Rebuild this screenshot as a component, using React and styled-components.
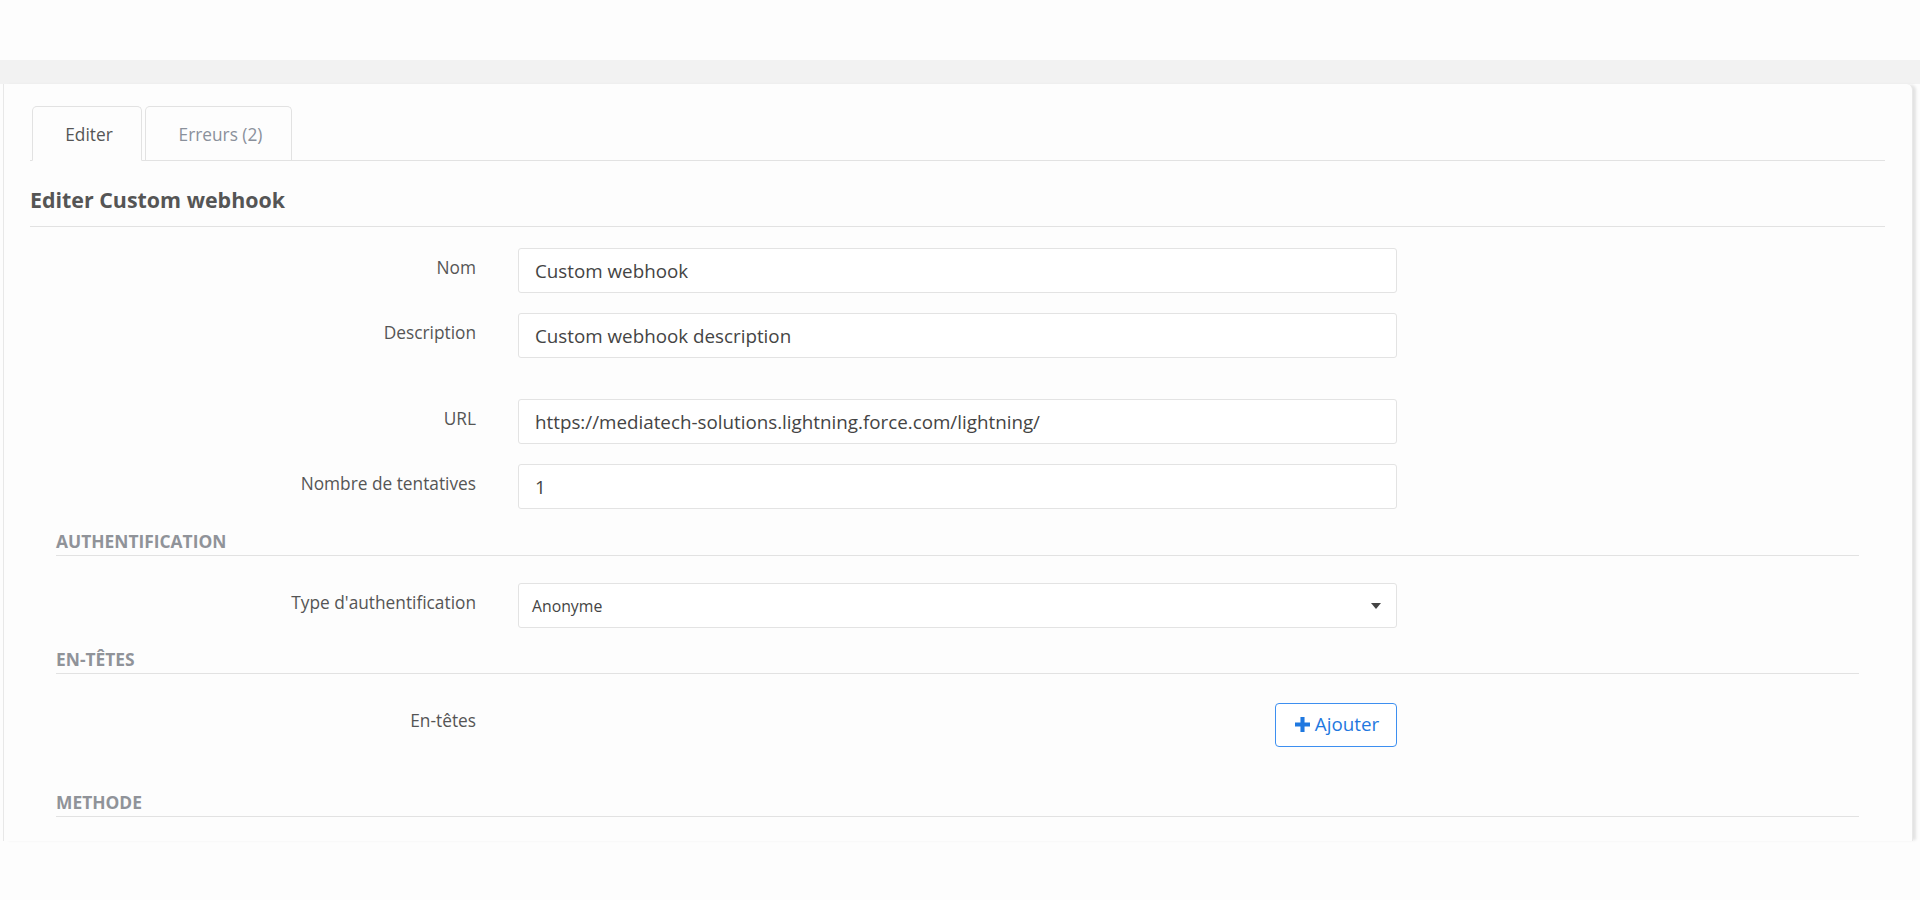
import styled, { createGlobalStyle } from 'styled-components';

const GlobalStyle = createGlobalStyle`
  body {
    margin: 0;
    background: #fdfdfd;
    font-family: 'Open Sans', 'Liberation Sans', sans-serif;
    color: #555;
  }
`;

const Page = styled.div`
  width: 1920px;
  height: 900px;
  overflow: hidden;
  background: #fdfdfd;
`;

const TopBand = styled.div`
  margin-top: 60px;
  height: 24px;
  background: #f2f2f2;
`;

const Card = styled.div`
  margin-left: 3px;
  width: 1910px;
  height: 757px;
  box-sizing: border-box;
  border: 1px solid #e8e8e8;
  border-top: none;
  border-bottom: none;
  border-radius: 0 6px 0 0;
  box-shadow: 4px 0 3px -1px #e2e2e2;
  background: #fdfdfd;
  padding: 22px 27px 0 26px;
`;

const TabBar = styled.div`
  display: flex;
  gap: 3px;
  height: 54px;
  padding-left: 2px;
  border-bottom: 1px solid #e2e2e2;
`;

const Tab = styled.div`
  width: ${p => p.$w}px;
  box-sizing: border-box;
  display: flex;
  align-items: center;
  justify-content: center;
  border: 1px solid #e2e2e2;
  border-bottom: ${p => (p.$active ? '1px solid #fdfdfd' : 'none')};
  border-radius: 5px 5px 0 0;
  margin-bottom: ${p => (p.$active ? '-1px' : '0')};
  font-size: 17.3px;
  color: ${p => (p.$active ? '#555' : '#8a909b')};
  padding: 2px 0 0 4px;
`;

const Heading = styled.h2`
  margin: 0;
  padding: 24px 0 12px 0;
  font-size: 21.4px;
  font-weight: 700;
  line-height: 29px;
  color: #555;
  border-bottom: 1px solid #e2e2e2;
`;

const Form = styled.div`
  padding-top: 21px;
`;

const Row = styled.div`
  display: grid;
  grid-template-columns: 446px 879px;
  column-gap: 42px;
  align-items: start;
  margin-bottom: ${p => p.$mb ?? 20}px;
`;

const Label = styled.label`
  text-align: right;
  font-size: 17.3px;
  line-height: 22px;
  padding-top: ${p => p.$pt ?? 9}px;
  color: #555;
`;

const Input = styled.div`
  height: 45px;
  box-sizing: border-box;
  border: 1px solid #e3e3e3;
  border-radius: 3px;
  background: #fff;
  padding: 0 16px;
  display: flex;
  align-items: center;
  font-size: 18.8px;
  color: #444;
`;

const Select = styled(Input)`
  padding: 0 15px 0 13px;
  justify-content: space-between;
  font-size: 15.8px;
  color: #444;
`;

const Caret = styled.span`
  width: 0;
  height: 0;
  border-left: 5px solid transparent;
  border-right: 5px solid transparent;
  border-top: 6px solid #444;
`;

const Section = styled.div`
  margin: ${p => p.$mt}px 26px 0 26px;
  padding-bottom: 3px;
  border-bottom: 1px solid #e2e2e2;
  font-size: 17.4px;
  font-weight: 700;
  line-height: 22px;
  color: #909399;
  text-transform: uppercase;
`;

const ButtonCell = styled.div`
  display: flex;
  justify-content: flex-end;
`;

const AddButton = styled.button`
  height: 44px;
  width: 122px;
  box-sizing: border-box;
  display: flex;
  align-items: center;
  justify-content: center;
  gap: 5px;
  border: 1px solid #3d8ff0;
  border-radius: 4px;
  background: #fff;
  color: #1f78e0;
  font-family: 'Open Sans', 'Liberation Sans', sans-serif;
  font-size: 18.8px;
  padding: 0 0 2px 2px;
  cursor: pointer;
`;

const Plus = () => (
  <svg width="15" height="15" viewBox="0 0 14 14">
    <path d="M5.1 0h3.8v5.1H14v3.8H8.9V14H5.1V8.9H0V5.1h5.1z" fill="#1f78e0" />
  </svg>
);

const fields = [
  { label: 'Nom', value: 'Custom webhook' },
  { label: 'Description', value: 'Custom webhook description', mb: 41 },
  { label: 'URL', value: 'https://mediatech-solutions.lightning.force.com/lightning/' },
  { label: 'Nombre de tentatives', value: '1', mb: 0 },
];

export default function App() {
  return (
    <Page>
      <GlobalStyle />
      <TopBand />
      <Card>
        <TabBar>
          <Tab $active $w={110}>Editer</Tab>
          <Tab $w={147}>Erreurs (2)</Tab>
        </TabBar>
        <Heading>Editer Custom webhook</Heading>

        <Form>
          {fields.map(f => (
            <Row key={f.label} $mb={f.mb}>
              <Label>{f.label}</Label>
              <Input>{f.value}</Input>
            </Row>
          ))}
        </Form>

        <Section $mt={21}>Authentification</Section>
        <Row style={{ marginTop: 27 }} $mb={0}>
          <Label>Type d'authentification</Label>
          <Select>
            Anonyme
            <Caret />
          </Select>
        </Row>

        <Section $mt={20}>En-têtes</Section>
        <Row style={{ marginTop: 29 }} $mb={0}>
          <Label $pt={7}>En-têtes</Label>
          <ButtonCell>
            <AddButton>
              <Plus />
              Ajouter
            </AddButton>
          </ButtonCell>
        </Row>

        <Section $mt={44}>Methode</Section>
      </Card>
    </Page>
  );
}
